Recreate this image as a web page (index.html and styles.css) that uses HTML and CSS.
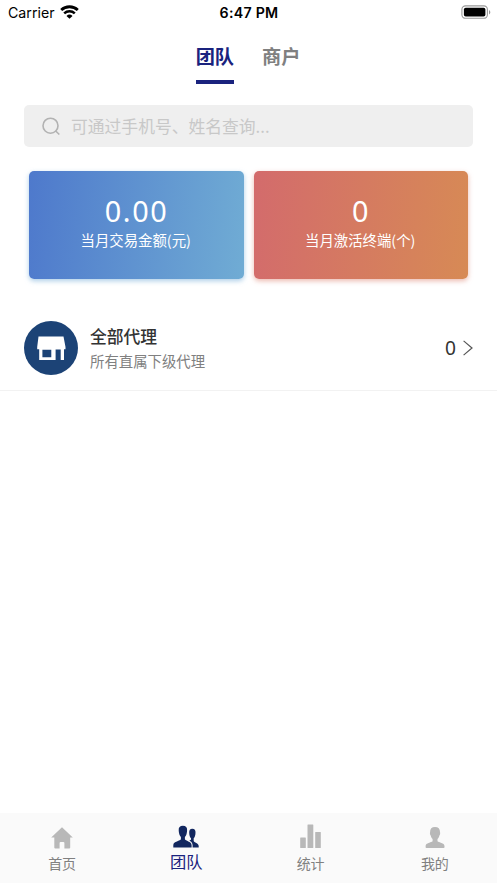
FILE: index.html
```html
<!DOCTYPE html>
<html lang="zh-CN">
<head>
<meta charset="utf-8">
<title>团队</title>
<link rel="stylesheet" href="styles.css">
</head>
<body>
<div class="app">
  <header class="status">
    <div class="carrier"><span>Carrier</span>
      <svg width="19" height="14" viewBox="0 0 19 14"><path d="M1.2 5.1a12 12 0 0 1 16.6 0" fill="none" stroke="#000" stroke-width="2.8"/><path d="M4.2 8.3a7.7 7.7 0 0 1 10.6 0" fill="none" stroke="#000" stroke-width="2.5"/><path d="M6.5 10.9a4.4 4.4 0 0 1 6 0L9.5 13.8z"/></svg>
    </div>
    <time class="clock">6:47 PM</time>
    <svg class="battery" width="30" height="14" viewBox="0 0 30 14"><rect x=".9" y=".9" width="25.5" height="12.4" rx="3.6" fill="none" stroke="#999" stroke-width="1.1"/><rect x="2.9" y="2.8" width="21.5" height="8.7" rx="1.8"/><path d="M28 5v4.4c1.8-.8 1.8-3.600 0-4.400z" fill="#999"/></svg>
  </header>
  <nav class="tabs">
    <div class="tab active">团队</div>
    <div class="tab">商户</div>
  </nav>
  <main>
    <div class="search">
      <svg width="19" height="19" viewBox="0 0 19 19" fill="none" stroke="#b2b2b2" stroke-width="1.6"><circle cx="8.500" cy="8.700" r="7.500"/><path d="M13.500 13.800l3.800 3.700"/></svg>
      <span>可通过手机号、姓名查询...</span>
    </div>
    <section class="cards">
      <div class="card blue"><div class="value">0.00</div><div class="label">当月交易金额(元)</div></div>
      <div class="card red"><div class="value">0</div><div class="label">当月激活终端(个)</div></div>
    </section>
    <section class="row">
      <svg class="shop" width="54" height="54" viewBox="0 0 54 54"><circle cx="27" cy="27" r="27" fill="#1c4376"/><path d="M14.500 15.500h25l2 10.500v2.300H40V39H36.700V28.500H31.600V39H15.200V28.300H13.200V26zM18.400 28.700v7.500h8.900v-7.500z" fill="#fff" fill-rule="evenodd"/></svg>
      <div class="info"><div class="title">全部代理</div><div class="subtitle">所有直属下级代理</div></div>
      <span class="count">0</span>
      <svg width="10" height="16" viewBox="0 0 10 16" fill="none" stroke="#555" stroke-width="1.2"><path d="M.6.900L9 8 .6 15.100"/></svg>
    </section>
  </main>
  <footer class="bottom">
    <div class="item"><svg width="26" height="26" viewBox="0 0 26 26"><path d="M13 4.200L23.800 14.500H21.200V24.500q0 1-1 1H15.400V20q0-1-1-1h-2.800q-1 0-1 1v5.500H6.300q-1 0-1-1V14.500H2.200z"/></svg><span>首页</span></div>
    <div class="item active"><svg width="26" height="26" viewBox="0 0 26 26"><path d="M9.900 2.800c3 0 4.400 1.700 4.200 4.500q-.1 4.700-2.200 6.600v2.400c.3 1.700 6.700 2 6.700 5.900v2.300H.3v-2.300C.3 18.300 7.600 18 7.900 16.300v-2.400Q5.800 12 5.700 7.300C5.500 4.500 7 2.800 9.900 2.800z"/><path d="M19.300 5.800c2.300 0 3.400 1.500 3.200 4-.1 3.200-.8 4.500-1.800 5.500v2.600c.3 1.600 5 2 5 5.100v1.500H19.600v-2.300c0-2.700-2-4-3.300-4.700 1-.5 1.700-.7 1.700-1.300v-.9c-1-1-1.700-2.400-1.800-5.500-.1-2.500.8-4 3.100-4z"/></svg><span>团队</span></div>
    <div class="item"><svg width="26" height="26" viewBox="0 0 26 26"><rect x="2.200" y="14.500" width="5.600" height="10.500" rx=".5"/><rect x="9.500" y="1.500" width="5.800" height="23.500" rx=".5"/><rect x="17.200" y="9" width="5.600" height="16" rx=".5"/></svg><span>统计</span></div>
    <div class="item"><svg width="26" height="26" viewBox="0 0 26 26"><path d="M13 4c3.300 0 5.100 1.900 5 5 .5 2-.1 3-.6 3.400-.4 1.900-1.200 3-1.900 3.700v2.100c1.200 1.400 7 1.300 7 5v1.100q0 .8-.8.8H4.400q-.8 0-.8-.8v-1.100c0-3.700 5.800-3.600 7-5v-2.100c-.7-.7-1.500-1.800-1.900-3.700-.5-.4-1.100-1.400-.6-3.400-.1-3.100 1.600-5 4.900-5z"/></svg><span>我的</span></div>
  </footer>
</div>
</body>
</html>
```
FILE: styles.css
```css
* { box-sizing: border-box; }
body { margin: 0; background: #fff; font-family: "Noto Sans CJK SC", sans-serif; }
svg { display: block; flex: none; }
.app { height: 883px; display: flex; flex-direction: column; }
.status { height: 26px; display: grid; grid-template-columns: 1fr auto 1fr; align-items: center; padding: 0 7px 0 8px; font: 14.2px/26px Inter, sans-serif; color: #000; }
.carrier { display: flex; align-items: center; gap: 5px; }
.carrier svg { margin-bottom: 3px; }
.clock { font-weight: 600; letter-spacing: .25px; }
.battery { justify-self: end; margin: 0 -1px 2px 0; }
.tabs { height: 58px; display: flex; justify-content: center; gap: 28px; margin-right: 1px; }
.tab { height: 58px; padding-top: 16px; border-bottom: 4px solid transparent; font-size: 19.2px; font-weight: 700; line-height: 28px; color: #808080; }
.tab.active { color: #1a237e; border-color: #1a237e; }
main { flex: 1; }
.search { margin: 21px 24px 0; height: 42px; padding-left: 18px; display: flex; align-items: center; gap: 10px; background: #efefef; border-radius: 5px; font-size: 16.8px; line-height: 42px; color: #c8c8c8; }
.cards { display: flex; gap: 10px; margin: 24px 29px 0; }
.card { flex: 1; height: 108px; border-radius: 5px; color: #fff; text-align: center; padding-top: 20px; }
.blue { background: linear-gradient(96deg, #4e79cc, #70acd4); box-shadow: 0 2px 5px #77add899; }
.red { background: linear-gradient(96deg, #d36b6c, #d78a55); box-shadow: 0 2px 5px #df8c7c99; }
.value { font-family: "Noto Sans", sans-serif; font-size: 28.8px; line-height: 40px; letter-spacing: 1.6px; margin-right: -.6px; }
.label { font-size: 14.4px; line-height: 20px; margin: -1px 1px 0 0; }
.row { height: 86px; margin-top: 26px; padding: 0 24px; display: flex; align-items: center; border-bottom: 1px solid #f2f2f2; }
.shop { margin-top: 1px; }
.info { flex: 1; margin-left: 12px; padding-top: 2px; }
.title { font-size: 16.8px; line-height: 25px; font-weight: 500; color: #333; }
.subtitle { font-size: 14.4px; line-height: 24px; color: #808080; }
.count { font-family: "Noto Sans", sans-serif; font-size: 19.2px; line-height: 28px; color: #333; margin-right: 7px; }
.bottom { height: 70px; display: grid; grid-template-columns: repeat(4, 1fr); background: #fafafa; }
.item { display: flex; flex-direction: column; align-items: center; padding-top: 10px; font-size: 14px; line-height: 24px; color: #808080; }
.item svg { fill: #b8b8b8; }
.item span { margin-top: 2px; }
.item.active { color: #1a237e; font-size: 16.3px; }
.item.active svg { fill: #12275f; }
.item.active span { margin-top: 0; }
```
